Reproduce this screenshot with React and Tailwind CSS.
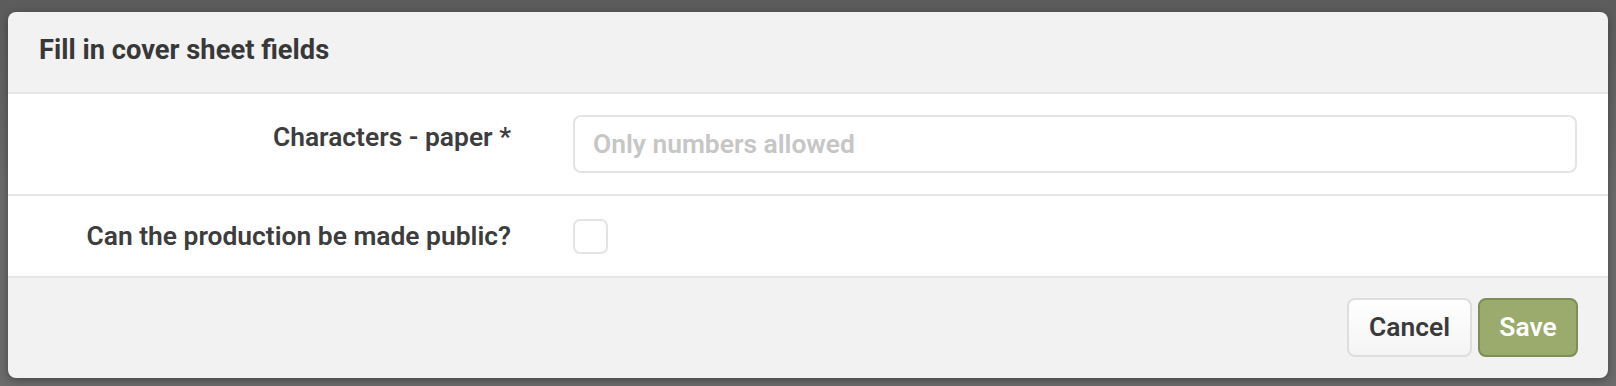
const font = "font-['Roboto','Liberation_Sans',sans-serif]";

function FormRow({ label, children, className = '', labelClass = '' }) {
  return (
    <div className={`flex px-[31px] border-b-2 border-[#e6e6e6] bg-white ${className}`}>
      <label className={`w-[472px] shrink-0 text-right text-[26.4px] font-semibold text-[#3d3d3d] leading-none ${labelClass}`}>
        {label}
      </label>
      <div className="ml-[62px] flex-1">{children}</div>
    </div>
  );
}

export default function App() {
  return (
    <div className={`${font} min-h-[386px] bg-[#6b6b6b] bg-gradient-to-b from-[#5c5c5c] via-[#6b6b6b] to-[#6b6b6b] pt-[12px] pl-[8px] pr-[8px] pb-[8px]`}>
      <div className="w-[1600px] overflow-hidden rounded-[8px] bg-[#f2f2f2] shadow-[0_2px_8px_rgba(0,0,0,0.35)]">
        {/* Header */}
        <div className="flex h-[82px] items-center border-b-2 border-[#e6e6e6] px-[31px] pb-[2px]">
          <h2 className="text-[27.3px] font-bold leading-none text-[#383838]">Fill in cover sheet fields</h2>
        </div>

        {/* Body */}
        <FormRow label="Characters - paper *" className="h-[102px] items-start pt-[21px]" labelClass="pt-[9px]">
          <input
            type="text"
            placeholder="Only numbers allowed"
            className="h-[58px] w-full rounded-[8px] border-2 border-[#e4e4e4] bg-white px-[18px] text-[26.4px] font-semibold text-[#3d3d3d] outline-none placeholder:text-[#c6c6c6]"
          />
        </FormRow>
        <FormRow label="Can the production be made public?" className="h-[82px] items-center">
          <input
            type="checkbox"
            className="block h-[35px] w-[35px] appearance-none rounded-[7px] border-2 border-[#e4e4e4] bg-white"
          />
        </FormRow>

        {/* Footer */}
        <div className="flex h-[100px] items-center justify-end gap-[6px] px-[30px] pb-[1px]">
          <button className="h-[59px] w-[125px] rounded-[8px] border-2 border-[#dedede] bg-gradient-to-b from-white to-[#f4f4f4] text-[26.4px] font-semibold text-[#3a3a3a]">
            Cancel
          </button>
          <button className="h-[59px] w-[100px] rounded-[8px] border-2 border-[#7f8e57] bg-[#9bab6d] text-[26.4px] font-semibold text-white">
            Save
          </button>
        </div>
      </div>
    </div>
  );
}
